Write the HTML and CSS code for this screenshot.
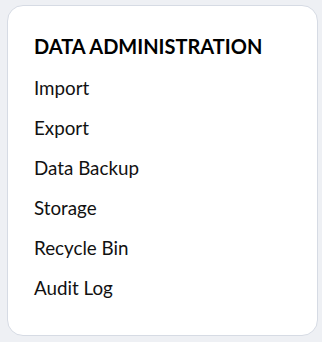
FILE: index.html
```html
<!DOCTYPE html>
<html lang="en">
<head>
  <meta charset="UTF-8">
  <title>Data Administration</title>
  <link rel="stylesheet" href="styles.css">
</head>
<body>

  <!-- Data administration menu -->
  <div class="card">
    <h2 class="card-title">DATA ADMINISTRATION</h2>
    <ul class="menu">
      <li><a href="#">Import</a></li>
      <li><a href="#">Export</a></li>
      <li><a href="#">Data Backup</a></li>
      <li><a href="#">Storage</a></li>
      <li><a href="#">Recycle Bin</a></li>
      <li><a href="#">Audit Log</a></li>
    </ul>
  </div>

</body>
</html>
```

FILE: styles.css
```css
html, body {
  margin: 0;
  padding: 0;
  height: 100%;
  font-family: Lato, 'Noto Sans', sans-serif;
  background: #eef0f4;
}

body {
  padding: 5px 4px 6px 7px;
  box-sizing: border-box;
}

.card {
  height: 100%;
  box-sizing: border-box;
  background: #fff;
  border: 1px solid #d6dbe4;
  border-radius: 16px;
  padding: 28px 26px;
}

.card-title {
  margin: 0 0 10px;
  font-size: 20px;
  font-weight: 700;
  line-height: 24px;
  color: #000;
}

.menu {
  list-style: none;
  margin: 0;
  padding: 0;
}

.menu li {
  font-size: 18.8px;
  line-height: 40px;
}

.menu a {
  color: #111;
  text-decoration: none;
}
```
